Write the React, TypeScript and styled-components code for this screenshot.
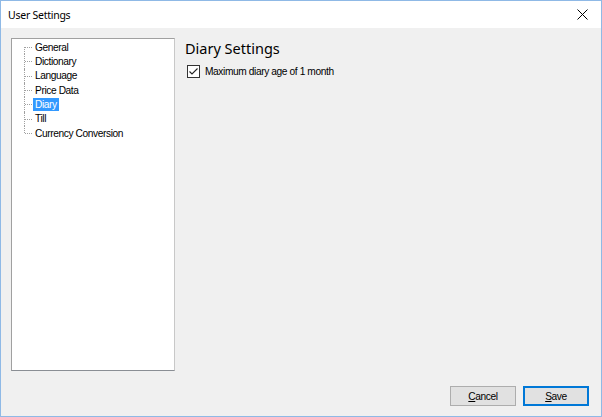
import styled, { createGlobalStyle } from 'styled-components'

const GlobalStyle = createGlobalStyle`
  html, body {
    margin: 0;
    padding: 0;
    background: #ffffff;
  }
  * {
    box-sizing: border-box;
  }
`

const Window = styled.div`
  width: 602px;
  height: 417px;
  border: 1px solid #8fb9e6;
  background: #f0f0f0;
  display: flex;
  flex-direction: column;
  font-family: "Liberation Sans", Arial, sans-serif;
  font-size: 10.2px;
  letter-spacing: -0.4px;
  color: #000;
`

const TitleBar = styled.div`
  height: 27px;
  background: #ffffff;
  display: flex;
  align-items: center;
  justify-content: space-between;
  padding: 0 8px 0 7px;
`

const Title = styled.span`
  font-family: "Noto Sans", "Open Sans", sans-serif;
  font-size: 10.5px;
  letter-spacing: -0.25px;
  color: #000;
`

const CloseButton = styled.div`
  width: 16px;
  height: 16px;
  display: flex;
  align-items: center;
  justify-content: center;
  margin-right: 3px;
`

const Body = styled.div`
  display: flex;
  padding: 10px 0 0 10px;
`

const TreeBox = styled.div`
  width: 164px;
  height: 333px;
  background: #ffffff;
  border: 1px solid #a0a0a0;
  border-right-color: #c8c8c8;
  border-bottom-color: #8a8e94;
  padding: 1px 0 0 0;
`

const TreeItem = styled.div<{ $first?: boolean; $last?: boolean }>`
  position: relative;
  height: 14.33px;
  display: flex;
  align-items: center;
  padding-left: 21px;

  &::before {
    content: '';
    position: absolute;
    left: 12px;
    top: ${p => (p.$first ? '50%' : '0')};
    bottom: ${p => (p.$last ? '50%' : '0')};
    border-left: 1px dotted #a0a0a0;
  }

  &::after {
    content: '';
    position: absolute;
    left: 13px;
    width: 7px;
    top: 50%;
    border-top: 1px dotted #a0a0a0;
  }
`

const ItemLabel = styled.span<{ $selected?: boolean }>`
  padding: 0 2px;
  line-height: 13px;
  background: ${p => (p.$selected ? '#3399ff' : 'transparent')};
  color: ${p => (p.$selected ? '#ffffff' : '#000000')};
`

const Panel = styled.div`
  margin-left: 10px;
  display: flex;
  flex-direction: column;
`

const Heading = styled.div`
  font-family: "Noto Sans", "Open Sans", sans-serif;
  font-size: 14.5px;
  letter-spacing: 0;
  line-height: 20px;
  color: #000;
`

const CheckRow = styled.label`
  display: flex;
  align-items: center;
  margin-top: 7px;
  margin-left: 2px;
`

const CheckBox = styled.div`
  width: 13px;
  height: 13px;
  border: 1px solid #333333;
  background: #ffffff;
  display: flex;
  align-items: center;
  justify-content: center;
  margin-right: 5px;
`

const Footer = styled.div`
  display: flex;
  justify-content: flex-end;
  gap: 7px;
  padding: 15px 12px 0 0;
`

const Button = styled.div<{ $default?: boolean }>`
  width: 66px;
  height: 20px;
  display: flex;
  align-items: center;
  justify-content: center;
  background: #e1e1e1;
  border: ${p => (p.$default ? '2px solid #0078d7' : '1px solid #adadad')};
  color: #000;

  u {
    text-decoration: underline;
  }
`

const items = [
  'General',
  'Dictionary',
  'Language',
  'Price Data',
  'Diary',
  'Till',
  'Currency Conversion',
]

export default function App() {
  return (
    <>
      <GlobalStyle />
      <Window>
        <TitleBar>
          <Title>User Settings</Title>
          <CloseButton>
            <svg width="11" height="11" viewBox="0 0 11 11">
              <path d="M0.5 0.5 L10.5 10.5 M10.5 0.5 L0.5 10.5" stroke="#000" strokeWidth="1" />
            </svg>
          </CloseButton>
        </TitleBar>
        <Body>
          <TreeBox>
            {items.map((item, i) => (
              <TreeItem key={item} $first={i === 0} $last={i === items.length - 1}>
                <ItemLabel $selected={item === 'Diary'}>{item}</ItemLabel>
              </TreeItem>
            ))}
          </TreeBox>
          <Panel>
            <Heading>Diary Settings</Heading>
            <CheckRow>
              <CheckBox>
                <svg width="11" height="11" viewBox="0 0 11 11">
                  <path d="M1.5 5.5 L4 8 L9.5 2.5" stroke="#222" strokeWidth="1.1" fill="none" />
                </svg>
              </CheckBox>
              Maximum diary age of 1 month
            </CheckRow>
          </Panel>
        </Body>
        <Footer>
          <Button>
            <span><u>C</u>ancel</span>
          </Button>
          <Button $default>
            <span><u>S</u>ave</span>
          </Button>
        </Footer>
      </Window>
    </>
  )
}
